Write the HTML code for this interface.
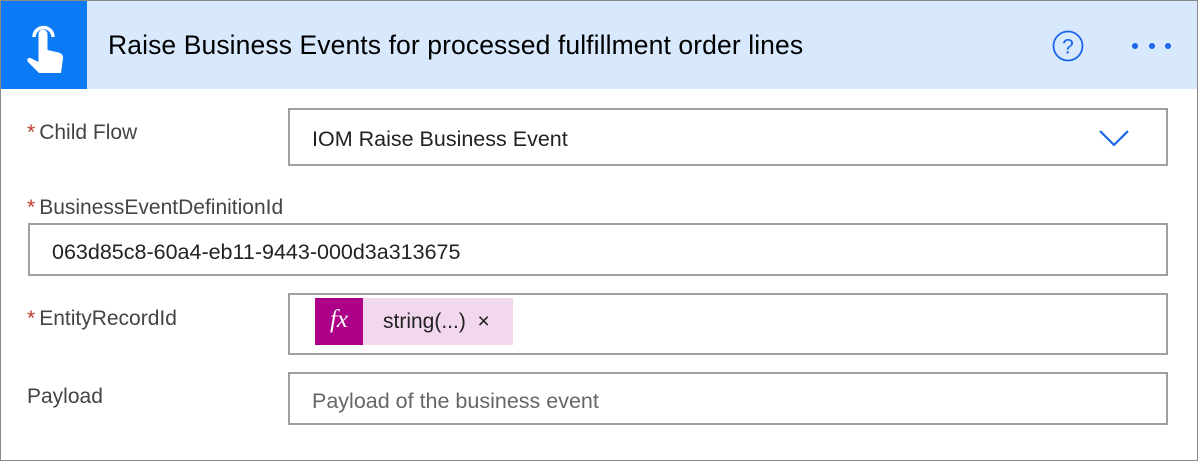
<!DOCTYPE html>
<html><head><style>
body{margin:0;width:1198px;height:461px;overflow:hidden;background:#fff;font-family:"Liberation Sans",sans-serif;}
.card{position:absolute;left:0;top:0;width:1196px;height:459px;border:1px solid #8a8a8a;}
.hdr{position:absolute;left:0;top:0;width:1196px;height:88px;background:#d8e9fd;}
.ico{position:absolute;left:0;top:0;width:86px;height:88px;background:#0a7af5;}
.title{position:absolute;left:107px;top:29px;font-size:26.5px;color:#000;letter-spacing:0.1px;}
.lbl{position:absolute;font-size:21px;color:#444;}
.lbl b{color:#c0392b;font-weight:normal;margin-right:4px;}
.box{position:absolute;border:2px solid #a0a0a0;box-sizing:border-box;background:#fff;font-size:21.5px;color:#222;}
</style></head><body>
<div class="card">
<div class="hdr"></div>
<div class="ico"><svg width="86" height="88" viewBox="0 0 86 88">
<path d="M33 36a9.5 9.5 0 1 1 19 0" fill="none" stroke="#fff" stroke-width="3.5"/>
<path d="M37.5 33a4.5 4.5 0 0 1 9 0v16l11 2.5c3 .8 5 3 4.5 6L60 72H38L27 61c-1.5-2 0-4.5 2.5-4l8 4z" fill="#fff"/>
</svg></div>
<div class="title">Raise Business Events for processed fulfillment order lines</div>
<svg style="position:absolute;left:1051px;top:29px" width="32" height="32"><circle cx="16" cy="16" r="14.5" fill="none" stroke="#1a66e8" stroke-width="1.8"/><text x="16" y="23.5" text-anchor="middle" font-size="21" fill="#1a66e8" font-family="Liberation Sans">?</text></svg>
<svg style="position:absolute;left:1126px;top:40px" width="50" height="10"><circle cx="8" cy="5" r="3" fill="#1a66e8"/><circle cx="25" cy="5" r="3" fill="#1a66e8"/><circle cx="41" cy="5" r="3" fill="#1a66e8"/></svg>
<div class="lbl" style="left:26px;top:120px"><b>*</b>Child Flow</div>
<div class="box" style="left:287px;top:107px;width:880px;height:58px;padding:17px 0 0 22px">IOM Raise Business Event
<svg style="position:absolute;right:36px;top:19px" width="32" height="18"><path d="M2 2l14 14 14-14" fill="none" stroke="#1a66e8" stroke-width="2.2"/></svg></div>
<div class="lbl" style="left:26px;top:195px"><b>*</b>BusinessEventDefinitionId</div>
<div class="box" style="left:27px;top:222px;width:1140px;height:53px;padding:15px 0 0 22px">063d85c8-60a4-eb11-9443-000d3a313675</div>
<div class="lbl" style="left:26px;top:306px"><b>*</b>EntityRecordId</div>
<div class="box" style="left:287px;top:292px;width:880px;height:62px">
<div style="position:absolute;left:25px;top:3px;width:48px;height:47px;background:#ab0087;color:#fff;font-family:'Liberation Serif',serif;font-style:italic;font-size:25px;text-align:center;line-height:44px">fx</div>
<div style="position:absolute;left:73px;top:3px;width:150px;height:47px;background:#f2d8ee;font-size:21px;line-height:47px;padding-left:20px;box-sizing:border-box">string(...)&nbsp;&nbsp;×</div>
</div>
<div class="lbl" style="left:26px;top:384px">Payload</div>
<div class="box" style="left:287px;top:371px;width:880px;height:53px;padding:15px 0 0 22px;color:#666">Payload of the business event</div>
</div>
</body></html>
